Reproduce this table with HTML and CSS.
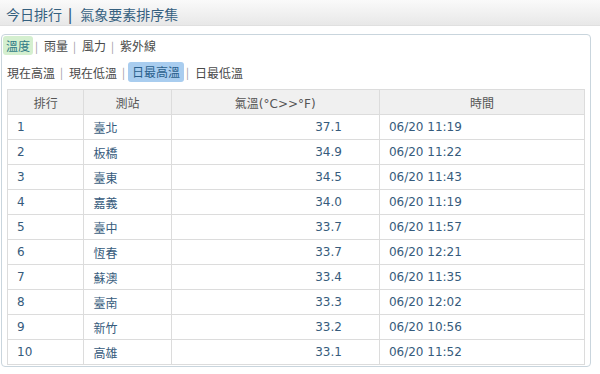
FILE: index.html
```html
<!DOCTYPE html>
<html lang="zh-Hant">
<head>
<meta charset="utf-8">
<link rel="stylesheet" href="styles.css">
</head>
<body>
<div class="topbar"><span class="title">今日排行<span class="bar">|</span>氣象要素排序集</span></div>
<div class="panel">
  <div class="tabs tabs1">
    <span class="tab on-green">溫度</span><span class="sep">|</span><span class="tab">雨量</span><span class="sep">|</span><span class="tab">風力</span><span class="sep">|</span><span class="tab">紫外線</span>
  </div>
  <div class="tabs tabs2">
    <span class="tab">現在高溫</span><span class="sep">|</span><span class="tab">現在低溫</span><span class="sep">|</span><span class="tab on-blue">日最高溫</span><span class="sep">|</span><span class="tab">日最低溫</span>
  </div>
  <table class="rank">
    <thead>
      <tr><th class="c1">排行</th><th class="c2">測站</th><th class="c3">氣溫(°C&gt;&gt;°F)</th><th class="c4">時間</th></tr>
    </thead>
    <tbody>
      <tr><td>1</td><td>臺北</td><td class="num">37.1</td><td>06/20 11:19</td></tr>
      <tr><td>2</td><td>板橋</td><td class="num">34.9</td><td>06/20 11:22</td></tr>
      <tr><td>3</td><td>臺東</td><td class="num">34.5</td><td>06/20 11:43</td></tr>
      <tr><td>4</td><td>嘉義</td><td class="num">34.0</td><td>06/20 11:19</td></tr>
      <tr><td>5</td><td>臺中</td><td class="num">33.7</td><td>06/20 11:57</td></tr>
      <tr><td>6</td><td>恆春</td><td class="num">33.7</td><td>06/20 12:21</td></tr>
      <tr><td>7</td><td>蘇澳</td><td class="num">33.4</td><td>06/20 11:35</td></tr>
      <tr><td>8</td><td>臺南</td><td class="num">33.3</td><td>06/20 12:02</td></tr>
      <tr><td>9</td><td>新竹</td><td class="num">33.2</td><td>06/20 10:56</td></tr>
      <tr><td>10</td><td>高雄</td><td class="num">33.1</td><td>06/20 11:52</td></tr>
    </tbody>
  </table>
</div>
</body>
</html>
```
FILE: styles.css
```css
html, body {
  margin: 0;
  padding: 0;
  background: #ffffff;
  font-family: "DejaVu Sans", "Noto Sans CJK TC", sans-serif;
}
.topbar {
  height: 25px;
  background: linear-gradient(#fafafa, #e8e8e8);
  border-bottom: 1px solid #e0e0e0;
  display: flex;
  align-items: center;
  padding-left: 6px;
}
.title {
  font-family: "Noto Sans CJK TC", sans-serif;
  font-size: 14px;
  color: #35607f;
  line-height: 20px;
  padding-top: 2px;
}
.title .bar {
  margin: 0 8px 0 6px;
  font-weight: bold;
}
.panel {
  margin: 8px 0 0 1px;
  width: 588px;
  border: 1px solid #c9d5dd;
  border-radius: 4px;
  padding: 1px 0 1px 0;
}
.tabs {
  display: flex;
  align-items: center;
  font-family: "Noto Sans CJK TC", sans-serif;
  font-size: 12px;
  color: #4a4a4a;
}
.tabs1 {
  height: 19px;
  padding-left: 1px;
}
.tabs2 {
  height: 20px;
  margin-top: 7px;
  padding-left: 2px;
}
.tab {
  padding: 0 3px;
  line-height: 19px;
  border-radius: 3px;
}
.on-green {
  background: #d4efcf;
  color: #2f7a86;
}
.on-blue {
  background: #a9cdef;
  color: #2a5f8c;
  line-height: 20px;
  padding: 0 4px;
}
.sep {
  color: #9a9a9a;
  font-size: 11px;
  margin: 0 3px 0 2px;
}
.rank {
  margin: 7px 0 0 5px;
  width: 578px;
  border-collapse: collapse;
  font-size: 12px;
  color: #365b7c;
}
.rank th {
  height: 24px;
  background: #f0f0f0;
  border: 1px solid #dcdcdc;
  font-weight: normal;
  color: #555;
  font-family: "DejaVu Sans", "Noto Sans CJK TC", sans-serif;
  padding: 0;
}
.rank td {
  height: 24px;
  border: 1px solid #dcdcdc;
  padding: 0 0 0 9px;
  font-family: "DejaVu Sans", "Noto Sans CJK TC", sans-serif;
}
.rank td.num {
  text-align: right;
  padding: 0 37px 0 0;
}
.c1 { width: 76px; }
.c2 { width: 87px; }
.c3 { width: 209px; }
.c4 { width: 206px; }
```
